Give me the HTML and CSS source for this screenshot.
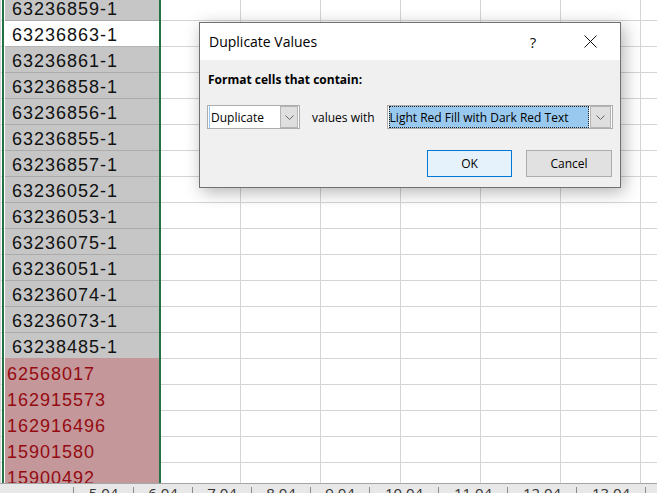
FILE: index.html
```html
<!DOCTYPE html>
<html>
<head>
<meta charset="utf-8">
<title>Duplicate Values</title>
<link rel="stylesheet" href="styles.css">
</head>
<body>
<div class="app">
  <div class="sheet">
    <div class="col-a">
      <div class="cell sel">63236859-1</div>
      <div class="cell active">63236863-1</div>
      <div class="cell sel">63236861-1</div>
      <div class="cell sel">63236858-1</div>
      <div class="cell sel">63236856-1</div>
      <div class="cell sel">63236855-1</div>
      <div class="cell sel">63236857-1</div>
      <div class="cell sel">63236052-1</div>
      <div class="cell sel">63236053-1</div>
      <div class="cell sel">63236075-1</div>
      <div class="cell sel">63236051-1</div>
      <div class="cell sel">63236074-1</div>
      <div class="cell sel">63236073-1</div>
      <div class="cell sel last">63238485-1</div>
      <div class="cell dup">62568017</div>
      <div class="cell dup">162915573</div>
      <div class="cell dup">162916496</div>
      <div class="cell dup">15901580</div>
      <div class="cell dup">15900492</div>
    </div>
  </div>
  <div class="tabs">
    <div class="tab first">5.04</div>
    <div class="tab">6.04</div>
    <div class="tab">7.04</div>
    <div class="tab">8.04</div>
    <div class="tab">9.04</div>
    <div class="tab wide">10.04</div>
    <div class="tab wide">11.04</div>
    <div class="tab wide">12.04</div>
    <div class="tab wide end">13.04</div>
  </div>
</div>

<div class="dialog">
  <div class="title-bar">
    <div class="title">Duplicate Values</div>
    <div class="help">?</div>
    <div class="close">
      <svg width="13" height="13" viewBox="0 0 13 13"><path d="M0.5 0.5 L12.5 12.5 M12.5 0.5 L0.5 12.5" stroke="#111" stroke-width="1" fill="none"/></svg>
    </div>
  </div>
  <div class="dlg-body">
    <div class="heading">Format cells that contain:</div>
    <div class="controls">
      <div class="select s1">
        <div class="value">Duplicate</div>
        <div class="drop"><svg width="9" height="5" viewBox="0 0 9 5"><path d="M0.5 0.5 L4.5 4.5 L8.5 0.5" stroke="#666" stroke-width="1" fill="none"/></svg></div>
      </div>
      <div class="label">values with</div>
      <div class="select s2">
        <div class="value">Light Red Fill with Dark Red Text</div>
        <div class="drop"><svg width="9" height="5" viewBox="0 0 9 5"><path d="M0.5 0.5 L4.5 4.5 L8.5 0.5" stroke="#666" stroke-width="1" fill="none"/></svg></div>
      </div>
    </div>
    <div class="buttons">
      <div class="btn ok">OK</div>
      <div class="btn cancel">Cancel</div>
    </div>
  </div>
</div>
</body>
</html>
```

FILE: styles.css
```css
html, body {
  margin: 0;
  padding: 0;
}
body {
  width: 657px;
  height: 493px;
  overflow: hidden;
  position: relative;
  background: #fff;
  font-family: "Open Sans", "Noto Sans", sans-serif;
}
.app {
  display: flex;
  flex-direction: column;
  height: 493px;
}
.sheet {
  flex: none;
  height: 483px;
  display: flex;
  overflow: hidden;
  background-color: #fff;
  background-image:
    linear-gradient(to right, #d4d4d4 1px, transparent 1px),
    linear-gradient(to bottom, #d4d4d4 1px, transparent 1px);
  background-size: 80px 100%, 100% 26px;
  background-position: 0 0, 0 20px;
}
.col-a {
  margin-top: -5px;
  margin-left: 2px;
  width: 159px;
  box-sizing: border-box;
  border-left: 2px solid #217346;
  border-right: 2px solid #217346;
  padding-left: 1px;
  background: #fff;
  display: flex;
  flex-direction: column;
  font-family: "Liberation Sans", Arial, sans-serif;
  font-size: 18px;
  letter-spacing: 1px;
}
.cell {
  flex: none;
  height: 26px;
  box-sizing: border-box;
  border-bottom: 1px solid #ababab;
  padding: 2px 0 0 7px;
  line-height: 24px;
  white-space: nowrap;
  overflow: hidden;
  color: #111;
}
.cell.sel {
  background: #c6c6c6;
}
.cell.active {
  background: #fff;
  border-bottom-color: #b4b4b4;
}
.cell.last {
  height: 25px;
  border-bottom: none;
}
.cell.dup {
  background: #c4979b;
  color: #950a10;
  border-bottom: none;
  padding: 4px 0 0 2px;
}
.tabs {
  flex: none;
  height: 10px;
  border-top: 1px solid #a5a5a5;
  background: #e8e8e8;
  display: flex;
  padding-left: 73px;
  overflow: hidden;
}
.tab {
  flex: none;
  width: 59px;
  height: 20px;
  margin-top: 3px;
  box-sizing: border-box;
  border-left: 1px solid #8c8c8c;
  text-align: center;
  font-size: 15px;
  line-height: 13px;
  color: #333;
}
.tab.first {
  width: 60px;
}
.tab.wide {
  width: 69px;
}
.tab.end {
  border-right: 1px solid #8c8c8c;
  width: 70px;
}
.dialog {
  position: absolute;
  left: 199px;
  top: 22px;
  width: 422px;
  height: 166px;
  box-sizing: border-box;
  border: 1px solid #707070;
  background: #f0f0f0;
  box-shadow: 3px 4px 16px rgba(0, 0, 0, 0.3);
  display: flex;
  flex-direction: column;
  font-size: 12px;
  color: #000;
}
.title-bar {
  flex: none;
  height: 37px;
  background: #fff;
  display: flex;
  align-items: center;
  padding: 0 7px 0 9px;
}
.title {
  flex: 1;
  font-size: 14px;
}
.help {
  width: 14px;
  text-align: center;
  font-size: 15px;
  margin-right: 27px;
  color: #111;
}
.close {
  width: 46px;
  height: 37px;
  display: flex;
  align-items: center;
  justify-content: center;
}
.dlg-body {
  flex: 1;
  padding: 12px 7px 0 7px;
  display: flex;
  flex-direction: column;
}
.heading {
  font-weight: 700;
  line-height: 16px;
  margin-left: 1px;
}
.controls {
  display: flex;
  align-items: center;
  height: 24px;
  margin-top: 17px;
}
.select {
  height: 24px;
  box-sizing: border-box;
  border: 1px solid #adadad;
  background: #fff;
  padding: 0 1px;
  display: flex;
}
.select .value {
  flex: 1;
  display: flex;
  align-items: center;
  white-space: nowrap;
  overflow: hidden;
}
.s1 {
  width: 93px;
}
.s1 .value {
  border-left: 1px solid #99c9ef;
  padding-left: 1px;
}
.s2 {
  width: 226px;
  margin-left: 12px;
}
.s2 .value {
  background: #99c9ef;
  border: 1px dotted #222;
  margin-right: 1px;
  padding-left: 0;
}
.drop {
  flex: none;
  width: 18px;
  box-sizing: border-box;
  border: 1px solid #b4b4b4;
  background: #dfdfdf;
  display: flex;
  align-items: center;
  justify-content: center;
}
.s2 .drop {
  width: 21px;
}
.label {
  margin-left: 12px;
}
.buttons {
  display: flex;
  justify-content: flex-end;
  gap: 14px;
  margin-top: 21px;
  margin-right: 1px;
}
.btn {
  height: 27px;
  box-sizing: border-box;
  display: flex;
  align-items: center;
  justify-content: center;
}
.btn.ok {
  width: 85px;
  border: 1px solid #0078d7;
  background: #e5f1fb;
}
.btn.cancel {
  width: 86px;
  border: 1px solid #adadad;
  background: #e1e1e1;
}
```
